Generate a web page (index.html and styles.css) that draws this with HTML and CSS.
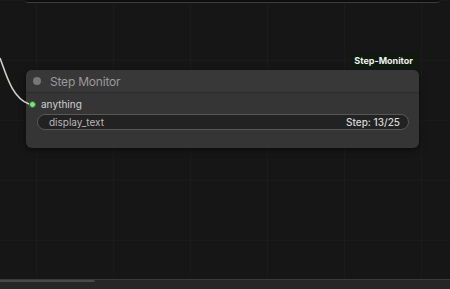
FILE: index.html
```html
<!DOCTYPE html>
<html lang="en">
<head>
<meta charset="UTF-8">
<meta name="viewport" content="width=device-width, initial-scale=1.0">
<title>Step Monitor</title>
<link rel="stylesheet" href="styles.css">
</head>
<body>

  <div class="canvas">
    <div class="prev-node"></div>

    <svg class="link" width="40" height="110" viewBox="0 0 40 110">
      <path d="M0 58 C 6 74, 12 98, 29 104" fill="none" stroke="#cfcfc6" stroke-width="1.6"/>
    </svg>

    <div class="badge-row">
      <span class="badge">Step-Monitor</span>
    </div>

    <div class="node">
      <div class="node-title">
        <span class="title-dot"></span>
        <span class="title-text">Step Monitor</span>
      </div>
      <div class="node-body">
        <div class="slot">
          <span class="slot-dot"></span>
          <span class="slot-label">anything</span>
        </div>
        <div class="widget">
          <span class="widget-name">display_text</span>
          <span class="widget-value">Step: 13/25</span>
        </div>
      </div>
    </div>
  </div>

  <footer class="bottom-bar">
    <div class="bottom-tab"></div>
  </footer>

</body>
</html>
```

FILE: styles.css
```css
html, body {
  margin: 0;
  height: 100%;
}
body {
  font-family: Inter, "Noto Sans", sans-serif;
  background-color: #161616;
  display: flex;
  flex-direction: column;
  overflow: hidden;
}
.canvas {
  position: relative;
  flex: 1;
  background-image:
    linear-gradient(90deg, rgba(255,255,255,0.025) 1px, transparent 1px),
    linear-gradient(rgba(255,255,255,0.015) 1px, transparent 1px);
  background-size: 77px 60px, 77px 60px;
  background-position: 36px 0, 0 0;
}
.prev-node {
  margin-left: 25px;
  width: 415px;
  height: 2px;
  background-color: #0e0e0e;
  border-bottom: 1px solid #3b3b3b;
  border-radius: 0 0 6px 6px;
}
.link {
  position: absolute;
  left: 0;
  top: 0;
}
.badge-row {
  display: flex;
  justify-content: flex-end;
  width: 419px;
  margin-top: 51px;
}
.badge {
  background-color: #0d1a0d;
  color: #f0f0f0;
  font-size: 9px;
  font-weight: 700;
  padding: 2px 6px 2px 3px;
  line-height: 10px;
  border-radius: 3px 3px 0 0;
}
.node {
  margin-left: 26px;
  width: 393px;
  margin-top: 2px;
  background-color: #353535;
  border-radius: 6px;
  box-shadow: 0 2px 6px rgba(0,0,0,0.5);
}
.node-title {
  display: flex;
  align-items: center;
  height: 22px;
  border-bottom: 1px solid #2c2c2c;
  background-color: #383838;
  border-radius: 6px 6px 0 0;
}
.title-dot {
  width: 8px;
  height: 8px;
  border-radius: 50%;
  background-color: #777777;
  margin-left: 7px;
}
.title-text {
  margin-left: 9px;
  color: #9a9a9a;
  font-size: 12px;
  letter-spacing: -0.2px;
}
.node-body {
  padding: 3px 0 18px;
}
.slot {
  display: flex;
  align-items: center;
  height: 16px;
}
.slot-dot {
  width: 5px;
  height: 5px;
  border-radius: 50%;
  background-color: #7be27b;
  border: 1.5px solid #2f6a2f;
  margin-left: 3px;
}
.slot-label {
  margin-left: 5px;
  color: #cfcfcf;
  font-size: 10px;
}
.widget {
  display: flex;
  justify-content: space-between;
  align-items: center;
  margin: 2px 10px 0 11px;
  height: 14px;
  padding: 0 8px 0 11px;
  background-color: #222222;
  border: 1px solid #575757;
  border-radius: 8px;
  font-size: 10px;
}
.widget-name {
  color: #b8b8b8;
}
.widget-value {
  color: #d8d8d8;
  font-weight: 500;
}
.bottom-bar {
  height: 9px;
  background-color: #262626;
  border-top: 1px solid #3a3a3a;
}
.bottom-tab {
  width: 95px;
  height: 2px;
  background-color: #4a4a4a;
  border-radius: 0 2px 0 0;
}
```
